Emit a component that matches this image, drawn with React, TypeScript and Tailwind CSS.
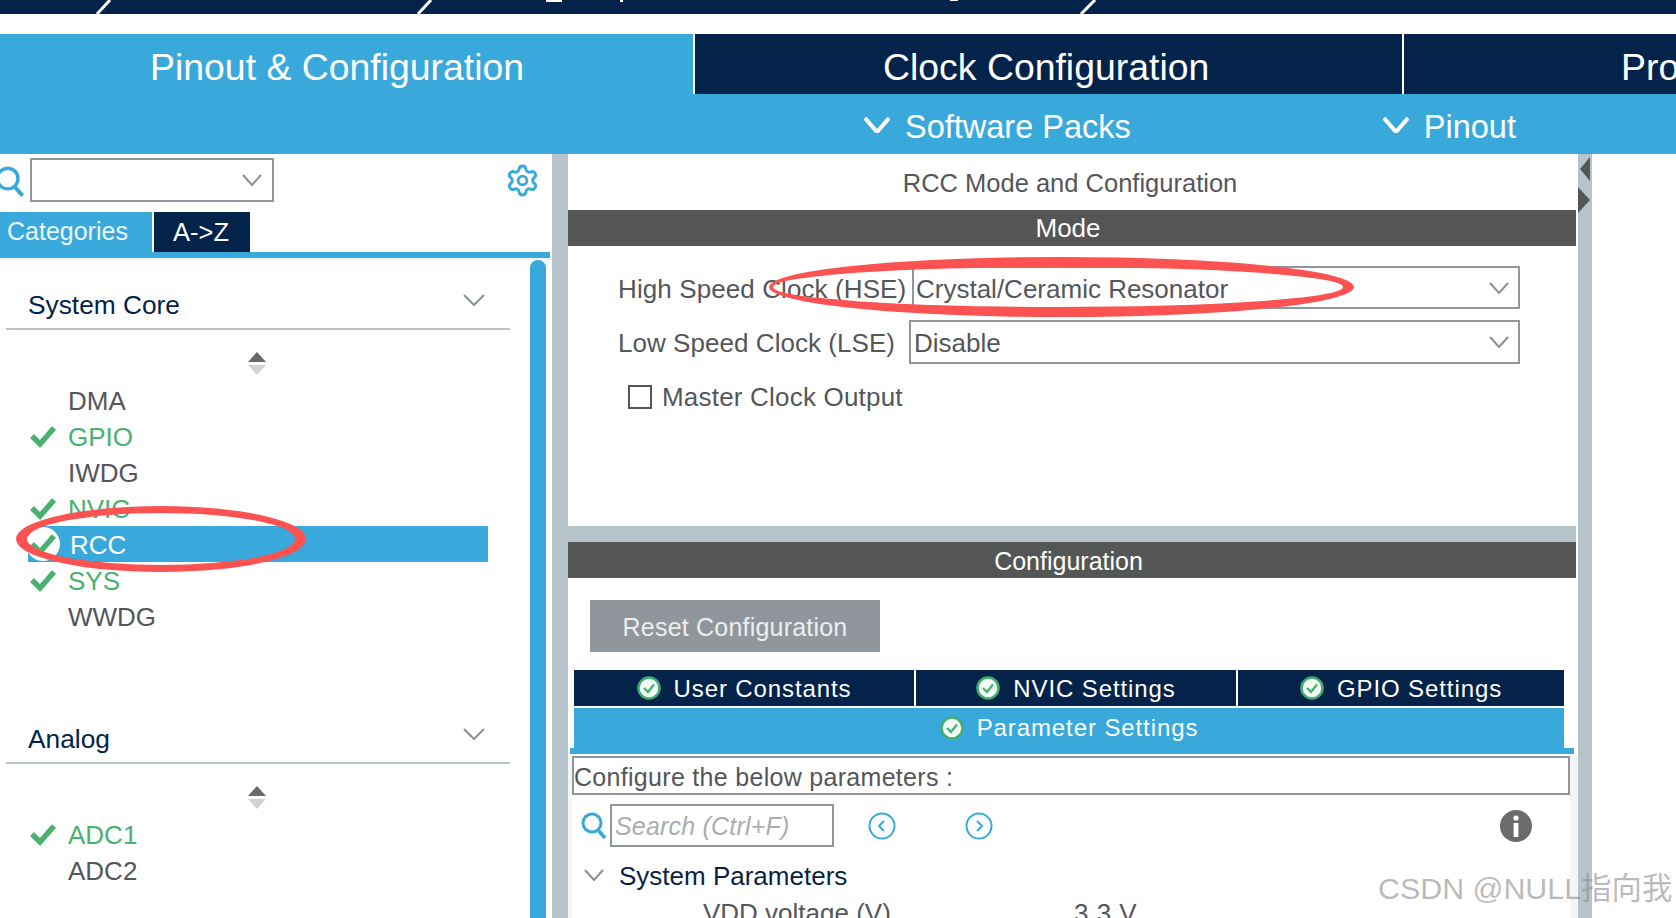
import { Settings } from "lucide-react";

const Chev = ({ w = 24, h = 12, c = "#8a8f94", sw = 2 }: { w?: number; h?: number; c?: string; sw?: number }) => (
  <svg width={w} height={h} viewBox={`0 0 ${w} ${h}`} className="shrink-0">
    <polyline points={`1,1 ${w / 2},${h - 1} ${w - 1},1`} fill="none" stroke={c} strokeWidth={sw} />
  </svg>
);

const Check = ({ circle = false }: { circle?: boolean }) => (
  <svg width="34" height="34" viewBox="0 0 34 34" className="shrink-0 -ml-[2px]">
    {circle && <circle cx="17" cy="17" r="17" fill="#fff" />}
    <polyline points="6,17 14,25 28,9" fill="none" stroke="#49b170" strokeWidth="5.5" />
  </svg>
);

const Badge = () => (
  <svg width="24" height="24" viewBox="0 0 24 24" className="shrink-0">
    <circle cx="12" cy="12" r="10.5" fill="#f4fbf6" stroke="#3fae6f" strokeWidth="2.5" />
    <polyline points="7,12 11,16 17,8.5" fill="none" stroke="#49b170" strokeWidth="2.4" />
  </svg>
);

const Sort = () => (
  <svg width="18" height="24" viewBox="0 0 18 24">
    <polygon points="9,0 18,10 0,10" fill="#666a6e" />
    <polygon points="9,23 18,13 0,13" fill="#d0d2d4" />
  </svg>
);

const Search = ({ s = 24 }: { s?: number }) => (
  <svg width={s} height={s + 4} viewBox="0 0 24 28" className="shrink-0 overflow-visible">
    <circle cx="10" cy="11" r="9" fill="none" stroke="#39a9dc" strokeWidth="3" />
    <line x1="16" y1="18" x2="23" y2="26" stroke="#39a9dc" strokeWidth="3.5" />
  </svg>
);

const Nav = ({ left }: { left: boolean }) => (
  <svg width="28" height="28" viewBox="0 0 28 28" className="shrink-0">
    <circle cx="14" cy="14" r="12.5" fill="none" stroke="#39a9dc" strokeWidth="2" />
    <polyline points={left ? "16,9 11,14 16,19" : "12,9 17,14 12,19"} fill="none" stroke="#39a9dc" strokeWidth="2" />
  </svg>
);

type Item = { name: string; on?: boolean; selected?: boolean };

const Row = ({ name, on, selected }: Item) => (
  <div className={`ml-[28px] w-[460px] h-[36px] flex items-center text-[26px] whitespace-nowrap ${selected ? "bg-[#39a9dc] text-white" : on ? "text-[#49b170]" : "text-[#54565a]"}`}>
    <div className="w-[40px] shrink-0 flex items-center justify-start">
      {on && <Check circle={selected} />}
    </div>
    <span className={selected ? "ml-[2px] pt-[2px]" : "pt-[2px]"}>{name}</span>
  </div>
);

const Section = ({ title, items, className = "" }: { title: string; items: Item[]; className?: string }) => (
  <div className={className}>
    <div className="ml-[6px] w-[504px] h-[70px] pt-[22px] border-b-2 border-[#b8c4cc] flex items-center justify-between pl-[22px] pr-[25px]">
      <span className="text-[26.3px] text-[#03234b] pt-[2px]">{title}</span>
      <div className="-mt-[10px]"><Chev w={22} h={12} /></div>
    </div>
    <div className="h-[52px] pt-[16px] pl-[248px] flex items-center"><Sort /></div>
    {items.map((i) => <Row key={i.name} {...i} />)}
  </div>
);

const SubTab = ({ label, w, className = "" }: { label: string; w: string; className?: string }) => (
  <div className={`${w} ${className} h-[36px] bg-[#03234b] text-white flex items-center justify-center gap-[13px] text-[24px] tracking-[0.9px]`}>
    <Badge />
    <span className="pt-[2px]">{label}</span>
  </div>
);

export default function App() {
  return (
    <div className="relative w-[1676px] h-[918px] overflow-hidden bg-white font-['Liberation_Sans',sans-serif]">
      <div className="h-[14px] bg-[#03234b]">
        <svg width="1676" height="14" viewBox="0 0 1676 14" className="block">
          <g stroke="#fff" strokeWidth="3" fill="none">
            <line x1="110" y1="0" x2="97" y2="14" />
            <line x1="431" y1="0" x2="418" y2="14" />
            <line x1="1095" y1="0" x2="1081" y2="14" />
          </g>
          <g fill="#fff">
            <rect x="546" y="0" width="16" height="2" />
            <rect x="620" y="0" width="3" height="2" />
            <rect x="950" y="0" width="8" height="1" />
          </g>
        </svg>
      </div>
      <div className="h-[20px]" />

      <div className="h-[60px] flex text-white text-[37.4px] bg-[#03234b] whitespace-nowrap">
        <div className="w-[693px] bg-[#39a9dc] flex items-center pl-[150px] pt-[7px]">Pinout &amp; Configuration</div>
        <div className="w-[2px] bg-white" />
        <div className="w-[707px] flex items-center pl-[188px] pt-[7px]">Clock Configuration</div>
        <div className="w-[2px] bg-white" />
        <div className="flex-1 flex items-center pl-[217px] pt-[7px] overflow-hidden">Project Manager</div>
      </div>

      <div className="h-[60px] bg-[#39a9dc] flex items-center text-white text-[32.5px] whitespace-nowrap pl-[864px]">
        <div className="mt-[1px]"><Chev w={26} h={16} c="#fff" sw={4} /></div>
        <span className="ml-[15px] pt-[6px]">Software Packs</span>
        <div className="ml-[252px] mt-[1px]"><Chev w={26} h={16} c="#fff" sw={4} /></div>
        <span className="ml-[15px] pt-[6px]">Pinout</span>
      </div>

      <div className="flex h-[764px]">
        <div className="w-[552px] shrink-0 flex flex-col overflow-hidden">
          <div className="h-[58px] shrink-0 flex items-start pt-[4px]">
            <div className="-ml-[4px] mt-[8px]"><Search s={28} /></div>
            <div className="ml-[6px] w-[244px] h-[44px] border-2 border-[#90969c] flex items-center justify-end pr-[10px]">
              <Chev w={20} h={12} />
            </div>
            <Settings size={35} strokeWidth={2} color="#39a9dc" className="ml-auto mr-[12px] mt-[5px]" />
          </div>
          <div className="h-[40px] shrink-0 flex text-white whitespace-nowrap">
            <div className="w-[152px] bg-[#39a9dc] text-[#eaf6fb] text-[25px] flex items-center pl-[7px]">Categories</div>
            <div className="w-[96px] ml-[2px] bg-[#03234b] text-[25.5px] flex items-center justify-center pr-[2px]">A-&gt;Z</div>
          </div>
          <div className="h-[6px] shrink-0 w-[550px] bg-[#39a9dc]" />
          <div className="h-[2px] shrink-0 w-[550px] bg-[#eef1f3]" />
          <div className="flex-1 flex min-h-0">
            <div className="w-[530px] shrink-0 overflow-hidden">
              <Section
                title="System Core"
                items={[
                  { name: "DMA" },
                  { name: "GPIO", on: true },
                  { name: "IWDG" },
                  { name: "NVIC", on: true },
                  { name: "RCC", on: true, selected: true },
                  { name: "SYS", on: true },
                  { name: "WWDG" },
                ]}
              />
              <Section title="Analog" className="mt-[60px]" items={[{ name: "ADC1", on: true }, { name: "ADC2" }]} />
            </div>
            <div className="w-[16px] bg-[#39a9dc] rounded-t-lg" />
          </div>
        </div>

        <div className="w-[16px] shrink-0 bg-[#b8c4cc]" />

        <div className="w-[1010px] shrink-0 flex flex-col overflow-hidden">
          <div className="w-[1008px] h-[56px] shrink-0 flex items-center justify-center pr-[4px] pt-[2px] text-[25.5px] text-[#54565a]">RCC Mode and Configuration</div>
          <div className="w-[1008px] h-[36px] shrink-0 bg-[#545655] text-white text-[26px] flex items-center justify-center pr-[8px] pt-[1px]">Mode</div>
          <div className="w-[1008px] h-[280px] shrink-0 pt-[20px] text-[26px] text-[#54565a]">
            <div className="flex h-[43px] pl-[50px]">
              <div className="w-[294px] flex items-center tracking-[0.1px] whitespace-nowrap pt-[4px]">High Speed Clock (HSE)</div>
              <div className="w-[608px] border-2 border-[#90969c] flex items-center justify-between pl-[2px] pr-[9px]">
                <span className="pt-[3px]">Crystal/Ceramic Resonator</span>
                <Chev w={20} h={12} />
              </div>
            </div>
            <div className="flex h-[44px] mt-[11px] pl-[50px]">
              <div className="w-[291px] flex items-center tracking-[0.05px] whitespace-nowrap pt-[2px]">Low Speed Clock (LSE)</div>
              <div className="w-[611px] border-2 border-[#90969c] flex items-center justify-between pl-[3px] pr-[9px]">
                <span className="pt-[2px]">Disable</span>
                <Chev w={20} h={12} />
              </div>
            </div>
            <div className="flex items-center h-[26px] mt-[20px] pl-[60px]">
              <div className="w-[24px] h-[24px] border-2 border-[#54565a]" />
              <span className="ml-[10px] tracking-[0.2px] whitespace-nowrap">Master Clock Output</span>
            </div>
          </div>
          <div className="w-[1008px] h-[16px] shrink-0 bg-[#b8c4cc]" />
          <div className="w-[1008px] h-[36px] shrink-0 bg-[#545655] text-white text-[25px] flex items-center justify-center pr-[7px] pt-[4px]">Configuration</div>

          <div className="mt-[22px] ml-[22px] w-[290px] h-[52px] shrink-0 bg-[#90969c] text-[#eceef0] text-[25px] tracking-[0.2px] flex items-center justify-center pt-[3px]">Reset Configuration</div>

          <div className="mt-[18px] ml-[6px] flex w-[990px] shrink-0 whitespace-nowrap">
            <SubTab label="User Constants" w="w-[340px]" />
            <SubTab label="NVIC Settings" w="w-[320px]" className="ml-[2px]" />
            <SubTab label="GPIO Settings" w="w-[326px]" className="ml-[2px]" />
          </div>
          <div className="mt-[2px] ml-[6px] w-[990px] h-[40px] shrink-0 bg-[#39a9dc] text-white text-[24px] tracking-[0.9px] flex items-center justify-center gap-[13px] whitespace-nowrap">
            <Badge />
            <span>Parameter Settings</span>
          </div>
          <div className="ml-[2px] w-[1004px] h-[6px] shrink-0 bg-[#39a9dc]" />

          <div className="flex-1 mt-[2px] border-l-[4px] border-r-[8px] border-[#f2f4f5] whitespace-nowrap">
            <div className="w-[998px] h-[39px] border-2 border-[#90969c] flex items-center text-[25px] tracking-[0.3px] text-[#54565a] pt-[4px]">
              Configure the below parameters :
            </div>
            <div className="mt-[9px] h-[43px] flex items-center">
              <div className="ml-[10px]"><Search s={24} /></div>
              <div className="ml-[4px] w-[224px] h-[43px] border-2 border-[#90969c] flex items-center pl-[3px] pt-[3px] text-[25px] tracking-[0.2px] italic text-[#a9adb1]">Search (Ctrl+F)</div>
              <div className="ml-[34px]"><Nav left /></div>
              <div className="ml-[69px]"><Nav left={false} /></div>
              <svg width="32" height="32" viewBox="0 0 32 32" className="ml-auto mr-[38px] shrink-0">
                <circle cx="16" cy="16" r="16" fill="#6a6b6d" />
                <circle cx="16" cy="8" r="2.6" fill="#fff" />
                <rect x="13.6" y="13" width="4.8" height="14" fill="#fff" />
              </svg>
            </div>
            <div className="mt-[10px] h-[36px] flex items-center">
              <div className="ml-[12px]"><Chev w={20} h={12} /></div>
              <span className="ml-[15px] text-[26px] text-[#0b1f45] pt-[2px]">System Parameters</span>
            </div>
            <div className="mt-[2px] h-[36px] flex items-center pl-[131px] text-[26px] text-[#54565a]">
              <span className="w-[371px]">VDD voltage (V)</span>
              <span className="tracking-[0.5px]">3.3 V</span>
            </div>
          </div>
        </div>

        <div className="w-[14px] shrink-0 bg-[#b8c4cc] flex flex-col items-center">
          <svg width="14" height="60" viewBox="0 0 14 60" className="mt-[3px]">
            <polygon points="12,0 12,24 2,12" fill="#545655" />
            <polygon points="0,30 0,56 12,43" fill="#545655" />
          </svg>
        </div>
      </div>

      <svg width="1676" height="918" viewBox="0 0 1676 918" className="absolute left-0 top-0 pointer-events-none">
        <path
          fillRule="evenodd"
          fill="#fc5252"
          d="M16 539a145 33 0 1 0 290 0a145 33 0 1 0 -290 0z M27 539a134 26 0 1 0 268 0a134 26 0 1 0 -268 0z"
        />
        <path
          fillRule="evenodd"
          fill="#fc5252"
          d="M769 287a292.5 30 0 1 0 585 0a292.5 30 0 1 0 -585 0z M773 287a285 20 0 1 0 570 0a285 20 0 1 0 -570 0z"
        />
      </svg>

      <div className="absolute left-[1378px] top-[870px] text-[30.4px] leading-[36px] whitespace-nowrap text-[#8c8c8c]/60 font-['Liberation_Sans','Noto_Sans_CJK_SC',sans-serif]">
        CSDN @NULL指向我
      </div>
    </div>
  );
}
